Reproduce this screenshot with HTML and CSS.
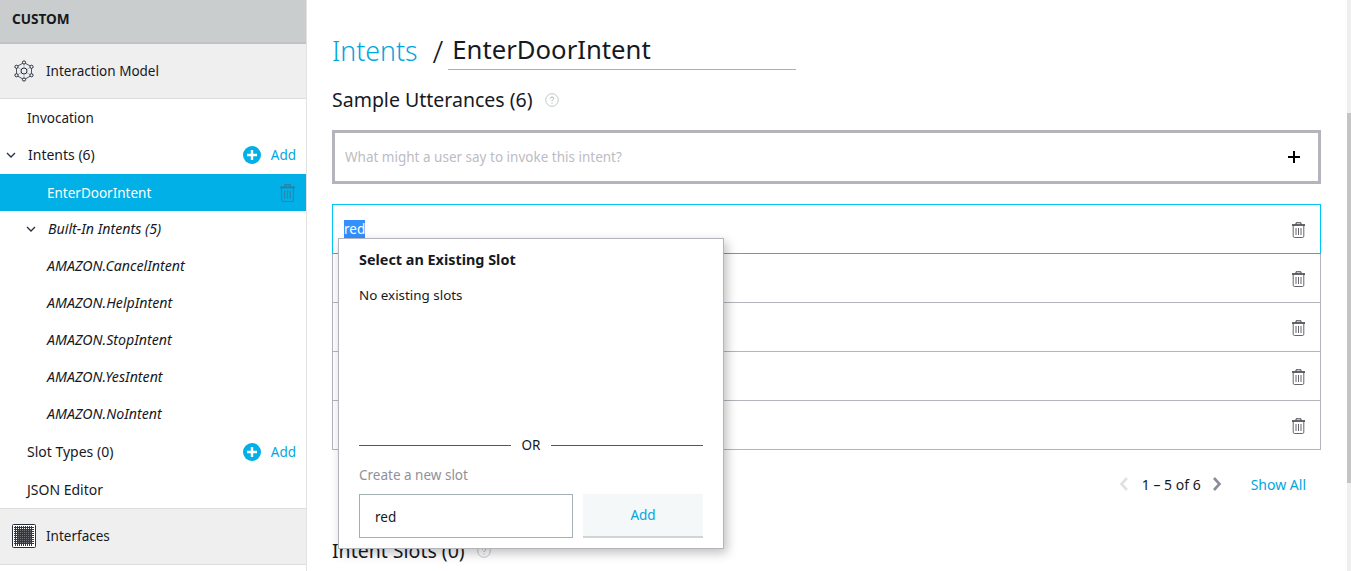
FILE: index.html
```html
<!DOCTYPE html>
<html lang="en">
<head>
<meta charset="UTF-8">
<meta name="viewport" content="width=device-width, initial-scale=1.0">
<title>Intents / EnterDoorIntent</title>
<link rel="stylesheet" href="styles.css">
</head>
<body>

<svg class="icon-defs" width="0" height="0">
    <symbol id="trash" viewBox="0 0 13 16">
        <path d="M0 3h13" fill="none" stroke="currentColor" stroke-width="1.6"/>
        <path d="M4 2.500V.8h5v1.700" fill="none" stroke="currentColor" stroke-width="1"/>
        <path d="M1.200 3.500v10.700c0 .8.500 1.300 1.300 1.300h8c.8 0 1.300-.5 1.300-1.300V3.500" fill="none" stroke="currentColor" stroke-width="1" opacity=".8"/>
        <path d="M4 6v7M6.500 6v7M9 6v7" fill="none" stroke="currentColor" stroke-width="1" opacity=".8"/>
    </symbol>
    <symbol id="plus-circle" viewBox="0 0 18 18">
        <circle cx="9" cy="9" r="9" fill="#00b0e6"/>
        <path d="M9 4v10M4 9h10" stroke="#fff" stroke-width="2.4"/>
    </symbol>
    <symbol id="chev-down" viewBox="0 0 10 6">
        <path d="M1 1l4 4 4-4" fill="none" stroke="#232f3e" stroke-width="1.3"/>
    </symbol>
    <symbol id="help" viewBox="0 0 14 14">
        <circle cx="7" cy="7" r="6.300" fill="none" stroke="#c3c8c8" stroke-width="1"/>
        <path d="M5.400 5.600c0-1 .7-1.500 1.600-1.500s1.600.5 1.600 1.300c0 1.200-1.600 1.200-1.600 2.600" fill="none" stroke="#9aa0a0" stroke-width=".9"/>
        <circle cx="7" cy="10" r=".6" fill="#9aa0a0"/>
    </symbol>
</svg>

<aside class="sidebar">
    <div class="side-title">CUSTOM</div>
    <div class="side-section side-section-model">
        <svg class="section-icon" viewBox="0 0 22 22" width="22" height="22">
            <path d="M11 2.500l7.500 4.300v8.600L11 19.700l-7.500-4.300V6.800z" fill="none" stroke="#232f3e" stroke-width=".8"/>
            <path d="M11 2.500v5.500M11 14v5.700M3.500 6.800l5 2.800M13.500 12.500l5 2.900M18.500 6.800l-5 2.800M8.500 12.500l-5 2.900" stroke="#8a9099" stroke-width=".6"/>
            <circle cx="11" cy="11" r="3" fill="none" stroke="#232f3e" stroke-width="1"/>
            <circle cx="11" cy="2.500" r="1.600" fill="#efefef" stroke="#232f3e"/>
            <circle cx="11" cy="19.500" r="1.600" fill="#efefef" stroke="#232f3e"/>
            <circle cx="3.500" cy="6.800" r="1.600" fill="#efefef" stroke="#232f3e"/>
            <circle cx="18.500" cy="6.800" r="1.600" fill="#efefef" stroke="#232f3e"/>
            <circle cx="3.500" cy="15.200" r="1.600" fill="#efefef" stroke="#232f3e"/>
            <circle cx="18.500" cy="15.200" r="1.600" fill="#efefef" stroke="#232f3e"/>
        </svg>
        <span>Interaction Model</span>
    </div>
    <nav class="side-list">
        <div class="side-row level-1"><span>Invocation</span></div>
        <div class="side-row side-row-tall level-0">
            <svg class="chev" width="10" height="6"><use href="#chev-down"/></svg>
            <span class="row-label row-wide">Intents (6)</span>
            <a class="row-add"><svg width="18" height="18"><use href="#plus-circle"/></svg><span>Add</span></a>
        </div>
        <div class="side-row level-2 row-active">
            <span class="row-label">EnterDoorIntent</span>
            <svg class="row-trash" width="15" height="18"><use href="#trash"/></svg>
        </div>
        <div class="side-row level-1b row-builtin">
            <svg class="chev" width="10" height="6"><use href="#chev-down"/></svg>
            <span class="row-label">Built-In Intents (5)</span>
        </div>
        <div class="side-row level-2 row-builtin">AMAZON.CancelIntent</div>
        <div class="side-row level-2 row-builtin">AMAZON.HelpIntent</div>
        <div class="side-row level-2 row-builtin">AMAZON.StopIntent</div>
        <div class="side-row level-2 row-builtin">AMAZON.YesIntent</div>
        <div class="side-row level-2 row-builtin">AMAZON.NoIntent</div>
        <div class="side-row side-row-tall level-1">
            <span class="row-label row-wide">Slot Types (0)</span>
            <a class="row-add"><svg width="18" height="18"><use href="#plus-circle"/></svg><span>Add</span></a>
        </div>
        <div class="side-row level-1 row-wide">JSON Editor</div>
    </nav>
    <div class="side-section side-section-interfaces">
        <svg class="section-icon" viewBox="0 0 24 24" width="24" height="24">
            <rect x=".5" y=".5" width="23" height="23" rx="1" fill="#fff" stroke="#232f3e"/>
            <rect x="5" y="5" width="14" height="14" fill="#6f7378"/>
            <path d="M2 3.500h20M2 5.500h20M2 7.500h20M2 9.500h20M2 11.500h20M2 13.500h20M2 15.500h20M2 17.500h20M2 19.500h20M3.500 2v20M5.500 2v20M7.500 2v20M9.500 2v20M11.500 2v20M13.500 2v20M15.500 2v20M17.500 2v20M19.500 2v20" stroke="#33383f" stroke-width="1"/>
        </svg>
        <span>Interfaces</span>
    </div>
</aside>

<main class="content">
    <div class="page-title">
        <a class="crumb">Intents</a>
        <span class="crumb-sep">/</span>
        <span class="intent-name">EnterDoorIntent</span>
    </div>

    <h2 class="section-head">Sample Utterances (6) <svg width="14" height="14"><use href="#help"/></svg></h2>

    <div class="utterance-input">
        <span class="placeholder">What might a user say to invoke this intent?</span>
        <svg class="input-plus" viewBox="0 0 12 12" width="12" height="12"><path d="M6 0v12M0 6h12" stroke="#000" stroke-width="2"/></svg>
    </div>

    <div class="utterance-list">
        <div class="utterance utterance-active">
            <span><span class="selected">red</span></span>
            <svg class="row-trash" width="13" height="16"><use href="#trash"/></svg>
        </div>
        <div class="utterance"><span></span><svg class="row-trash" width="13" height="16"><use href="#trash"/></svg></div>
        <div class="utterance"><span></span><svg class="row-trash" width="13" height="16"><use href="#trash"/></svg></div>
        <div class="utterance"><span></span><svg class="row-trash" width="13" height="16"><use href="#trash"/></svg></div>
        <div class="utterance"><span></span><svg class="row-trash" width="13" height="16"><use href="#trash"/></svg></div>
    </div>

    <div class="pager">
        <svg width="10" height="14" viewBox="0 0 10 14"><path d="M8 1L2.500 7 8 13" fill="none" stroke="#dfe1e3" stroke-width="2.600"/></svg>
        <span class="pager-text">1 – 5 of 6</span>
        <svg width="10" height="14" viewBox="0 0 10 14"><path d="M2 1l5.500 6L2 13" fill="none" stroke="#8b8d99" stroke-width="2.600"/></svg>
        <a class="show-all">Show All</a>
    </div>

    <h2 class="section-head section-slots">Intent Slots (0) <svg width="14" height="14"><use href="#help"/></svg></h2>

    <div class="slot-popup">
        <h4 class="popup-title">Select an Existing Slot</h4>
        <p class="popup-empty">No existing slots</p>
        <div class="popup-or"><span>OR</span></div>
        <label class="popup-label">Create a new slot</label>
        <div class="popup-form">
            <div class="popup-input">red</div>
            <button class="popup-add">Add</button>
        </div>
    </div>
</main>

<div class="scrollbar"><div class="scroll-thumb"></div></div>

</body>
</html>
```

FILE: styles.css
```css
html, body {
    height: 100%;
}
body {
    margin: 0;
    display: flex;
    height: 571px;
    overflow: hidden;
    background: #fff;
    color: #16191f;
    font-family: "Noto Sans", Arial, sans-serif;
    font-size: 13.5px;
}
.icon-defs {
    position: absolute;
}
a {
    color: #00a6e0;
}

/* sidebar */
.sidebar {
    width: 306px;
    flex: none;
    border-right: 1px solid #e3e3e3;
    overflow: hidden;
}
.side-title {
    height: 42px;
    padding-left: 12px;
    line-height: 38px;
    font-weight: 700;
    font-size: 13.6px;
    background: #cacdcd;
    border-bottom: 2px solid #c0c3c3;
}
.side-section {
    display: flex;
    align-items: center;
    gap: 11px;
    background: #efefef;
    border-bottom: 1px solid #dddddd;
}
.side-section-model {
    height: 54px;
    padding-left: 13px;
}
.side-section-interfaces {
    height: 54px;
    padding: 0 0 1px 12px;
    border-top: 1px solid #dddddd;
    gap: 10px;
}
.side-list {
    display: flex;
    flex-direction: column;
}
.side-row {
    display: flex;
    align-items: center;
    height: 37px;
    box-sizing: border-box;
    padding-right: 10px;
}
.side-row-tall {
    height: 38px;
}
.level-0 {
    padding-left: 6px;
}
.level-0 .chev {
    margin-right: 12px;
}
.level-1 {
    padding-left: 27px;
}
.level-1b {
    padding-left: 26px;
}
.level-1b .chev {
    margin-right: 12px;
}
.level-2 {
    padding-left: 47px;
}
.row-label {
    flex: 1;
}
.row-wide {
    font-size: 14px;
}
.row-label.row-wide {
    margin-bottom: 2px;
}
.row-builtin {
    padding-bottom: 2px;
    font-style: italic;
    font-size: 14.2px;
}
.row-active {
    background: #00b0e6;
    color: #fff;
}
.row-active .row-trash {
    color: #2f7d9c;
    margin: 0 1px 0 0;
}
.row-add {
    display: flex;
    align-items: center;
    gap: 10px;
}

/* main column */
.content {
    position: relative;
    flex: 1;
    min-width: 0;
    padding: 0 26px 0 25px;
}
.page-title {
    display: flex;
    align-items: flex-end;
    height: 70px;
}
.crumb {
    height: 38px;
    line-height: 38px;
    font-size: 26.7px;
    font-weight: 300;
}
.crumb-sep {
    height: 38px;
    margin-left: 15px;
    line-height: 38px;
    font-size: 31px;
    font-weight: 300;
}
.intent-name {
    width: 348px;
    height: 39px;
    margin-left: 5px;
    padding-left: 4px;
    box-sizing: border-box;
    line-height: 38px;
    font-size: 25.7px;
    border-bottom: 1px solid #aab0b2;
}
.section-head {
    display: flex;
    align-items: center;
    gap: 12px;
    margin: 17px 0 0;
    line-height: 26px;
    font-size: 19.5px;
    font-weight: 400;
}
.utterance-input {
    display: flex;
    justify-content: space-between;
    align-items: center;
    height: 54px;
    box-sizing: border-box;
    margin-top: 17px;
    padding: 0 18px 0 10px;
    border: 3px solid #b4b4bd;
}
.placeholder {
    color: #bcbcc4;
}
.utterance-list {
    margin-top: 20px;
}
.utterance {
    display: flex;
    justify-content: space-between;
    align-items: center;
    height: 49px;
    box-sizing: border-box;
    padding: 0 15px 0 11px;
    border: 1px solid #b4b4bd;
    border-top: 0;
}
.utterance-active {
    height: 50px;
    border: 1px solid #00c4f5;
}
.row-trash {
    margin-top: 2px;
    color: #3f3f45;
}
.selected {
    background: #3390ff;
    color: #fff;
}
.pager {
    display: flex;
    justify-content: flex-end;
    align-items: center;
    height: 20px;
    margin-top: 24px;
    padding-right: 15px;
    font-size: 14px;
}
.pager-text {
    margin: 0 11px 0 13px;
}
.show-all {
    margin-left: 29px;
}
.section-head.section-slots {
    margin-top: 44px;
}

/* slot popup lies over the utterance rows */
.slot-popup {
    position: absolute;
    left: 31px;
    top: 238px;
    width: 386px;
    height: 311px;
    box-sizing: border-box;
    padding: 11px 20px 0;
    display: flex;
    flex-direction: column;
    background: #fff;
    border: 1px solid #b4b4bd;
    box-shadow: 3px 4px 10px rgba(0, 0, 0, 0.25);
}
.popup-title {
    margin: 0;
    font-size: 14.4px;
    font-weight: 700;
}
.popup-empty {
    margin: 17px 0 0;
    font-size: 13.4px;
}
.popup-or {
    display: flex;
    align-items: center;
    gap: 11px;
    margin-top: 132px;
    font-size: 13.5px;
}
.popup-or::before,
.popup-or::after {
    content: "";
    flex: 1;
    height: 1px;
    background: #55555c;
}
.popup-label {
    margin-top: 12px;
    color: #8f9199;
    font-size: 13.5px;
}
.popup-form {
    display: flex;
    justify-content: space-between;
    margin-top: 10px;
}
.popup-input {
    width: 214px;
    height: 44px;
    box-sizing: border-box;
    padding-left: 15px;
    line-height: 44px;
    border: 1px solid #a2b0b4;
}
.popup-add {
    width: 120px;
    height: 44px;
    padding: 0;
    font: inherit;
    color: #00a6e0;
    background: #f4f8f9;
    border: 0;
    border-bottom: 2px solid #d0d5d6;
}

.scrollbar {
    flex: none;
    width: 4px;
    padding-top: 113px;
    box-sizing: border-box;
    background: #efefef;
}
.scroll-thumb {
    height: 370px;
    background: #c4c4c4;
}
```
